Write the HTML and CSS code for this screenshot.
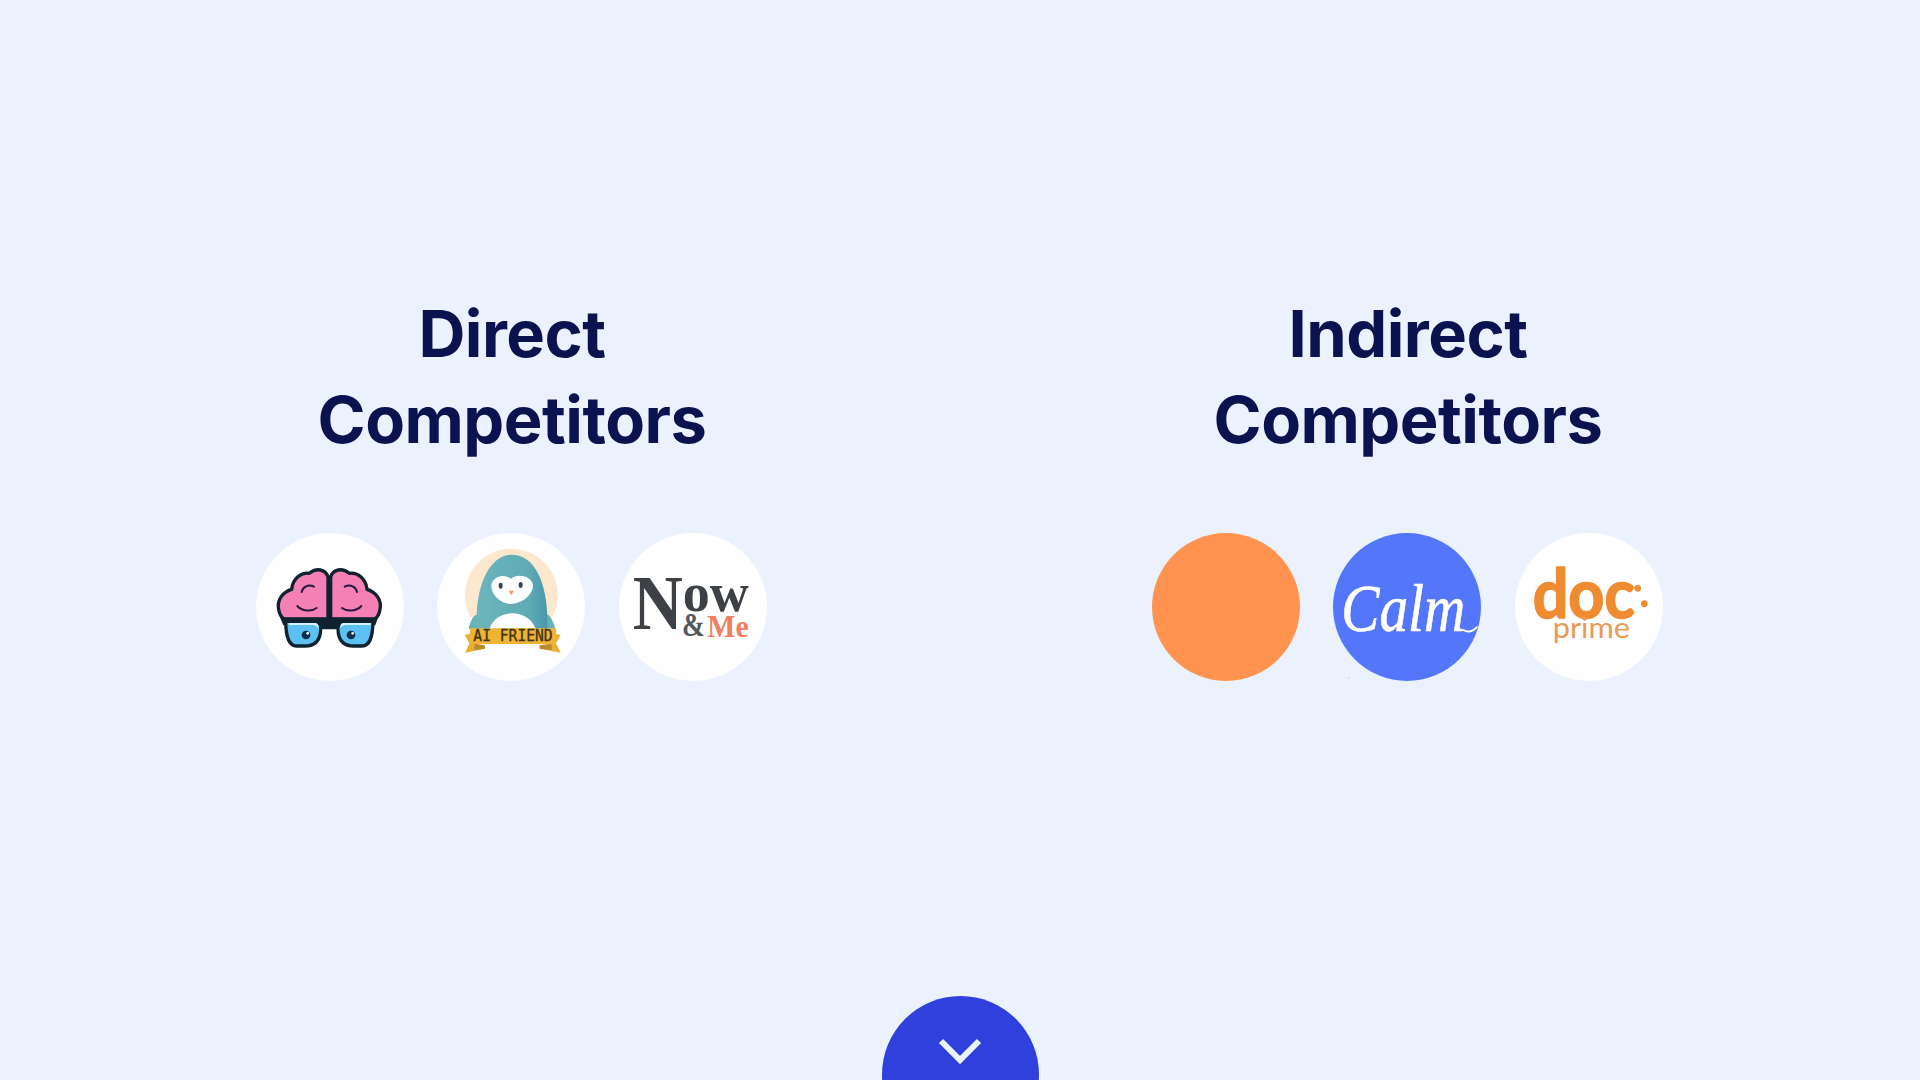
FILE: index.html
```html
<!DOCTYPE html>
<html lang="en">
<head>
<meta charset="utf-8">
<title>Competitors</title>
<link rel="stylesheet" href="styles.css">
</head>
<body>
<div class="page">
  <main class="columns">
    <section class="group">
      <h2 class="title">Direct<br>Competitors</h2>
      <div class="logos">
        <div class="logo">
          <svg class="mark" viewBox="48 39 444 444">
            <g class="brain">
              <path class="lobe" d="M264 298V170C256 148 230 142 208 160C184 156 158 176 155 208C128 216 110 240 116 268C118 282 124 292 132 298Z"/>
              <path class="crease" d="M222 200C205 192 188 200 185 216M172 258C186 274 214 276 230 264"/>
            </g>
            <g class="brain" transform="matrix(-1 0 0 1 536 0)">
              <path class="lobe" d="M264 298V170C256 148 230 142 208 160C184 156 158 176 155 208C128 216 110 240 116 268C118 282 124 292 132 298Z"/>
              <path class="crease" d="M222 200C205 192 188 200 185 216M172 258C186 274 214 276 230 264"/>
            </g>
            <path class="frame" d="M120 292H414L406 316H300L292 328H246L238 316H130Z"/>
            <path class="lens" d="M137 304H225C240 304 245 320 241 340C236 368 220 378 195 378H170C148 378 138 356 137 304Z"/>
            <path class="lens" d="M399 304H311C296 304 291 320 295 340C300 368 316 378 341 378H366C388 378 398 356 399 304Z"/>
            <path class="shine" d="M146 309H224C232 309 237 316 237 326C229 316 222 315 212 315H147Z"/>
            <path class="shine" d="M310 309H392V315H318C310 315 304 319 301 326C301 316 304 309 310 309Z"/>
            <circle class="pupil" cx="198" cy="345" r="13"/>
            <circle class="pupil" cx="333" cy="345" r="13"/>
            <circle class="glint" cx="203" cy="340" r="4"/>
            <circle class="glint" cx="338" cy="340" r="4"/>
          </svg>
        </div>
        <div class="logo">
          <svg class="mark" viewBox="37 39 444 444">
            <defs>
              <linearGradient id="teal" x1="0" x2="1" y1="0" y2="0">
                <stop offset="0" stop-color="#6cb5bb"/>
                <stop offset="0.75" stop-color="#5eabb5"/>
                <stop offset="1" stop-color="#4898ab"/>
              </linearGradient>
            </defs>
            <circle class="halo" cx="260" cy="225" r="139"/>
            <path class="wing" d="M132 326C136 304 146 286 156 284L190 326Z"/>
            <path class="wing" d="M392 326C386 304 376 284 364 282L330 326Z"/>
            <path class="body" d="M156 325C150 190 198 104 262 104C330 104 372 190 368 325Z"/>
            <path class="belly" d="M195 325C205 294 235 280 262 280C292 280 320 294 332 325Z"/>
            <path class="face" d="M258 176C238 160 206 168 200 194C198 224 228 252 258 252C292 252 326 224 325 194C318 166 278 160 258 176Z"/>
            <ellipse class="eye" cx="228" cy="197" rx="6" ry="9"/>
            <ellipse class="eye" cx="288" cy="195" rx="6" ry="9"/>
            <path class="beak" d="M252 212H268L260 226Z"/>
            <path class="tail" d="M120 344L150 340V372L180 376V386L122 398L134 370Z"/>
            <path class="tail" d="M408 344L380 340V372L345 376V386L408 398L394 370Z"/>
            <path class="fold" d="M150 372L180 376V386L148 390Z"/>
            <path class="fold" d="M380 372L345 376V386L382 390Z"/>
            <rect class="ribbon" x="136" y="325" width="258" height="47"/>
            <text class="ribbon-text" x="265" y="362" textLength="238" lengthAdjust="spacingAndGlyphs">AI FRIEND</text>
          </svg>
        </div>
        <div class="logo">
          <svg class="mark" viewBox="41 39 444 444">
            <text class="now-n" x="82" y="328" textLength="150" lengthAdjust="spacingAndGlyphs">N</text>
            <text class="now-ow" x="232" y="272" textLength="198" lengthAdjust="spacingAndGlyphs">ow</text>
            <text class="now-amp" x="230" y="349" textLength="68" lengthAdjust="spacingAndGlyphs">&amp;</text>
            <text class="now-me" x="306" y="352" textLength="124" lengthAdjust="spacingAndGlyphs">Me</text>
          </svg>
        </div>
      </div>
    </section>
    <section class="group">
      <h2 class="title">Indirect<br>Competitors</h2>
      <div class="logos">
        <div class="logo logo-orange"></div>
        <div class="logo logo-blue">
          <svg class="mark" viewBox="27 39 444 444">
            <text class="calm" x="52" y="334" textLength="372" lengthAdjust="spacingAndGlyphs">Calm</text>
            <path class="calm-tail" d="M418 330C432 338 448 334 458 322"/>
            <circle class="speck" cx="75" cy="473" r="1.5"/>
          </svg>
        </div>
        <div class="logo">
          <svg class="mark" viewBox="29 39 444 444">
            <text class="doc" x="82" y="293" textLength="306" lengthAdjust="spacingAndGlyphs">doc</text>
            <circle class="doc-dot" cx="397" cy="205" r="10"/>
            <circle class="doc-dot" cx="417" cy="251" r="10"/>
            <text class="prime" x="142" y="354" textLength="232" lengthAdjust="spacingAndGlyphs">prime</text>
          </svg>
        </div>
      </div>
    </section>
  </main>
  <button class="next" type="button" aria-label="Next">
    <svg class="chevron" viewBox="0 0 44 28"><path d="M3 3L22 22L41 3"/></svg>
  </button>
</div>
</body>
</html>
```
FILE: styles.css
```css
* { box-sizing: border-box; }
html, body { margin: 0; padding: 0; }
body { background: #ebf2fe; font-family: Inter, "Liberation Sans", sans-serif; }
.page {
  height: 1080px;
  overflow: hidden;
  display: flex;
  flex-direction: column;
  align-items: center;
}
.columns {
  width: 100%;
  padding: 291px 192px 0;
  display: grid;
  grid-template-columns: 640px 640px;
  column-gap: 256px;
}
.group { display: flex; flex-direction: column; align-items: center; }
.title {
  margin: 0 0 70px;
  font-size: 65px;
  line-height: 86px;
  font-weight: 700;
  letter-spacing: -0.5px;
  text-align: center;
  color: #0a1250;
}
.logos { display: flex; gap: 33.5px; margin-right: 2px; }
.logo {
  width: 148px;
  height: 148px;
  border-radius: 50%;
  background: #fefefe;
  flex: none;
}
.logo-orange { background: #ff934f; }
.logo-blue { background: #5376fb; }
.mark { display: block; width: 148px; height: 148px; overflow: visible; }
.next {
  margin-top: auto;
  margin-bottom: -73px;
  width: 157px;
  height: 157px;
  border: 0;
  border-radius: 50%;
  background: #2f40dc;
  padding: 0 0 45px;
  display: flex;
  align-items: center;
  justify-content: center;
  flex: none;
}
.chevron { width: 44px; height: 28px; display: block; }
.chevron path { fill: none; stroke: #ebf2fe; stroke-width: 6; }

.lobe { fill: #f580b5; stroke: #10222f; stroke-width: 10; stroke-linejoin: round; }
.crease { fill: none; stroke: #27173f; stroke-width: 6; stroke-linecap: round; }
.frame { fill: #10222f; }
.lens { fill: #5cc0f2; stroke: #10222f; stroke-width: 10; stroke-linejoin: round; }
.shine { fill: #d8f1fc; }
.pupil { fill: #10304a; }
.glint { fill: #fff; }

.halo { fill: #fbe8cf; }
.wing { fill: #69b2b8; }
.body { fill: url(#teal); }
.belly { fill: #fdfefe; }
.face { fill: #fdfefe; }
.eye { fill: #3a4450; }
.beak { fill: #ec9f60; }
.tail { fill: #e9ae34; }
.fold { fill: #b98a2a; }
.ribbon { fill: #efb432; }
.ribbon-text {
  font-family: "DejaVu Sans Mono", "Liberation Mono", monospace;
  font-size: 46px;
  font-weight: 400;
  fill: #43321a;
  stroke: #43321a;
  stroke-width: 1;
  text-anchor: middle;
}

.now-n, .now-ow, .now-amp, .now-me {
  font-family: "Liberation Serif", serif;
  font-weight: 700;
}
.now-n { font-size: 232px; fill: #3d4045; }
.now-ow { font-size: 162px; fill: #3d4045; }
.now-amp { font-size: 98px; fill: #55585c; }
.now-me { font-size: 96px; fill: #f07f62; }

.calm {
  font-family: "Liberation Serif", serif;
  font-style: italic;
  font-size: 205px;
  fill: #fff;
  stroke: #fff;
  stroke-width: 2;
}
.calm-tail { fill: none; stroke: #fff; stroke-width: 6; stroke-linecap: round; }
.speck { fill: #9aa3b5; }

.doc {
  font-family: Lato, "Noto Sans", sans-serif;
  font-size: 206px;
  font-weight: 700;
  fill: #ef8b30;
  stroke: #ef8b30;
  stroke-width: 5;
  stroke-linejoin: round;
}
.doc-dot { fill: #ef8b30; }
.prime {
  font-family: Lato, "Noto Sans", sans-serif;
  font-size: 86px;
  font-weight: 400;
  fill: #ea9a55;
}
```
